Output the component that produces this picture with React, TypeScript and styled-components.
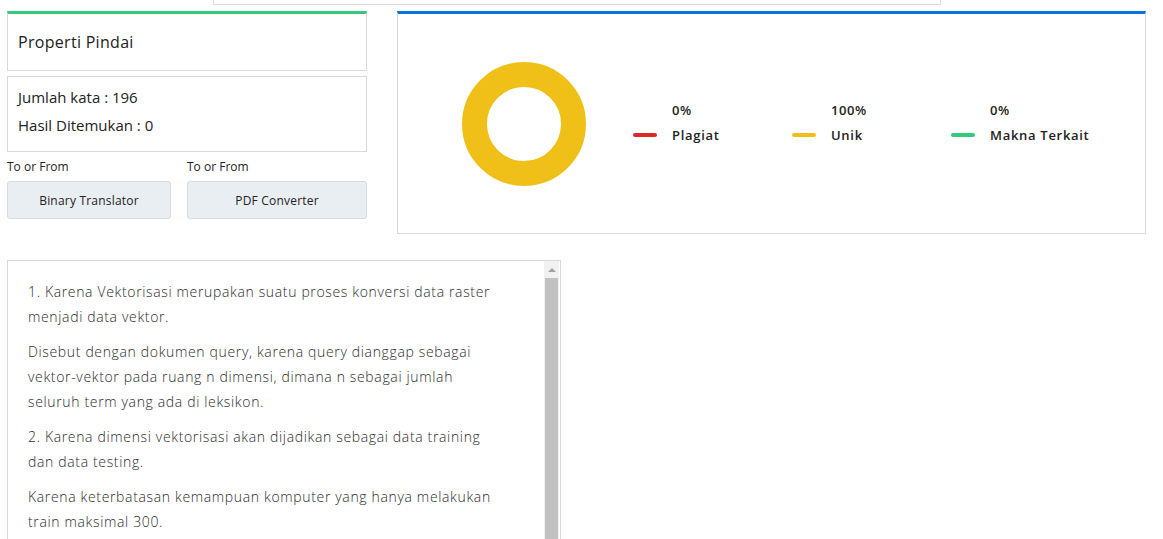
import React from "react";
import styled, { createGlobalStyle } from "styled-components";

const GlobalStyle = createGlobalStyle`
  body {
    margin: 0;
    background: #fff;
    font-family: "Open Sans", "Noto Sans", sans-serif;
    color: #212529;
  }
`;

const Page = styled.div`
  padding: 0 17px 0 7px;
`;

const TopStrip = styled.div`
  display: flex;
`;

const SearchBottom = styled.div`
  width: 726px;
  height: 4px;
  margin-left: 206px;
  border: 1px solid #dcdcdc;
  border-top: none;
`;

const MainRow = styled.div`
  display: flex;
  align-items: flex-start;
  gap: 30px;
  margin-top: 6px;
`;

const LeftColumn = styled.div`
  width: 360px;
  display: flex;
  flex-direction: column;
`;

const Card = styled.div<{ $accent?: string }>`
  border: 1px solid #d9d9d9;
  border-top: ${(p) => (p.$accent ? `3px solid ${p.$accent}` : "1px solid #d9d9d9")};
  background: #fff;
`;

const TitleCard = styled(Card)`
  display: flex;
  align-items: center;
  padding: 0 10px;
  box-sizing: border-box;
  height: 60px;
`;

const Title = styled.h4`
  margin: 0;
  font-size: 16px;
  font-weight: 500;
  letter-spacing: 0.3px;
  color: #222;
`;

const StatsCard = styled(Card)`
  margin-top: 5px;
  padding: 6px 10px 0;
  height: 76px;
  box-sizing: border-box;
`;

const StatLine = styled.div`
  font-size: 15px;
  font-weight: 500;
  color: #222;
  line-height: 28px;
`;

const LinkGrid = styled.div`
  display: grid;
  grid-template-columns: 180px 180px;
  margin-top: 7px;
`;

const LinkCell = styled.div<{ $pad?: number }>`
  padding-right: ${(p) => p.$pad ?? 0}px;
`;

const LinkLabel = styled.div`
  font-size: 12px;
  color: #222;
  line-height: 16px;
  margin-bottom: 6px;
`;

const LinkButton = styled.button`
  width: 100%;
  height: 38px;
  background: #e9eef3;
  border: 1px solid #d4dbe2;
  border-radius: 3px;
  font-family: inherit;
  font-size: 12px;
  font-weight: 500;
  letter-spacing: 0.2px;
  color: #222;
  cursor: pointer;
`;

const ChartCard = styled(Card)`
  width: 749px;
  height: 223px;
  box-sizing: border-box;
  display: flex;
  align-items: center;
  padding-left: 63px;
`;

const Legend = styled.div`
  display: flex;
  margin-left: 46px;
  margin-top: -2px;
`;

const LegendItem = styled.div`
  width: 159px;
  display: grid;
  grid-template-columns: 24px auto;
  column-gap: 15px;
  row-gap: 7px;
  align-items: center;
`;

const LegendValue = styled.div`
  grid-column: 2;
  font-size: 13px;
  font-weight: 600;
  letter-spacing: 0.6px;
  color: #222;
`;

const LegendSwatch = styled.span<{ $color: string }>`
  display: block;
  height: 4px;
  border-radius: 2px;
  background: ${(p) => p.$color};
`;

const LegendName = styled.div`
  font-size: 13px;
  font-weight: 600;
  letter-spacing: 0.7px;
  color: #222;
`;

const TextBox = styled.div`
  width: 554px;
  height: 320px;
  margin-top: 26px;
  box-sizing: border-box;
  border: 1px solid #d9d9d9;
  display: flex;
`;

const TextBody = styled.div`
  flex: 1;
  overflow: hidden;
  padding: 18px 10px 10px 20px;
`;

const ScrollRail = styled.div`
  width: 15px;
  background: #f1f1f1;
  display: flex;
  flex-direction: column;
  margin-right: 1px;
`;

const ScrollArrow = styled.div`
  height: 17px;
  display: flex;
  align-items: center;
  justify-content: center;

  &::before {
    content: "";
    border-left: 4px solid transparent;
    border-right: 4px solid transparent;
    border-bottom: 4px solid #a3a3a3;
  }
`;

const ScrollThumb = styled.div`
  flex: 1;
  margin: 0 1px 30px 1px;
  background: #c1c1c1;
`;

const Paragraph = styled.p`
  margin: 0 0 10px;
  font-size: 14px;
  font-weight: 300;
  line-height: 25px;
  letter-spacing: 0.65px;
  white-space: pre-line;
  color: #2b2b2b;
`;

const legend = [
  { value: "0%", name: "Plagiat", color: "#dc2a2a" },
  { value: "100%", name: "Unik", color: "#f0c019" },
  { value: "0%", name: "Makna Terkait", color: "#35c979" },
];

const paragraphs = [
  "1. Karena Vektorisasi merupakan suatu proses konversi data raster\nmenjadi data vektor.",
  "Disebut dengan dokumen query, karena query dianggap sebagai\nvektor-vektor pada ruang n dimensi, dimana n sebagai jumlah\nseluruh term yang ada di leksikon.",
  "2. Karena dimensi vektorisasi akan dijadikan sebagai data training\ndan data testing.",
  "Karena keterbatasan kemampuan komputer yang hanya melakukan\ntrain maksimal 300.",
  "3. Karena data yang digunakan hanya sebagian dari keseluruhan\ndata yang ada.",
];

function Donut() {
  return (
    <svg width="126" height="126" viewBox="0 0 126 126">
      <circle cx="63" cy="63" r="49.5" fill="none" stroke="#f0c019" strokeWidth="25" />
    </svg>
  );
}

export default function App() {
  return (
    <Page>
      <GlobalStyle />
      <TopStrip>
        <SearchBottom />
      </TopStrip>
      <MainRow>
        <LeftColumn>
          <TitleCard $accent="#35c979">
            <Title>Properti Pindai</Title>
          </TitleCard>
          <StatsCard>
            <StatLine>Jumlah kata : 196</StatLine>
            <StatLine>Hasil Ditemukan : 0</StatLine>
          </StatsCard>
          <LinkGrid>
            <LinkCell $pad={16}>
              <LinkLabel>To or From</LinkLabel>
              <LinkButton>Binary Translator</LinkButton>
            </LinkCell>
            <LinkCell>
              <LinkLabel>To or From</LinkLabel>
              <LinkButton>PDF Converter</LinkButton>
            </LinkCell>
          </LinkGrid>
        </LeftColumn>
        <ChartCard $accent="#0a74da">
          <Donut />
          <Legend>
            {legend.map((item) => (
              <LegendItem key={item.name}>
                <LegendValue>{item.value}</LegendValue>
                <LegendSwatch $color={item.color} />
                <LegendName>{item.name}</LegendName>
              </LegendItem>
            ))}
          </Legend>
        </ChartCard>
      </MainRow>
      <TextBox>
        <TextBody>
          {paragraphs.map((text, i) => (
            <Paragraph key={i}>{text}</Paragraph>
          ))}
        </TextBody>
        <ScrollRail>
          <ScrollArrow />
          <ScrollThumb />
        </ScrollRail>
      </TextBox>
    </Page>
  );
}
